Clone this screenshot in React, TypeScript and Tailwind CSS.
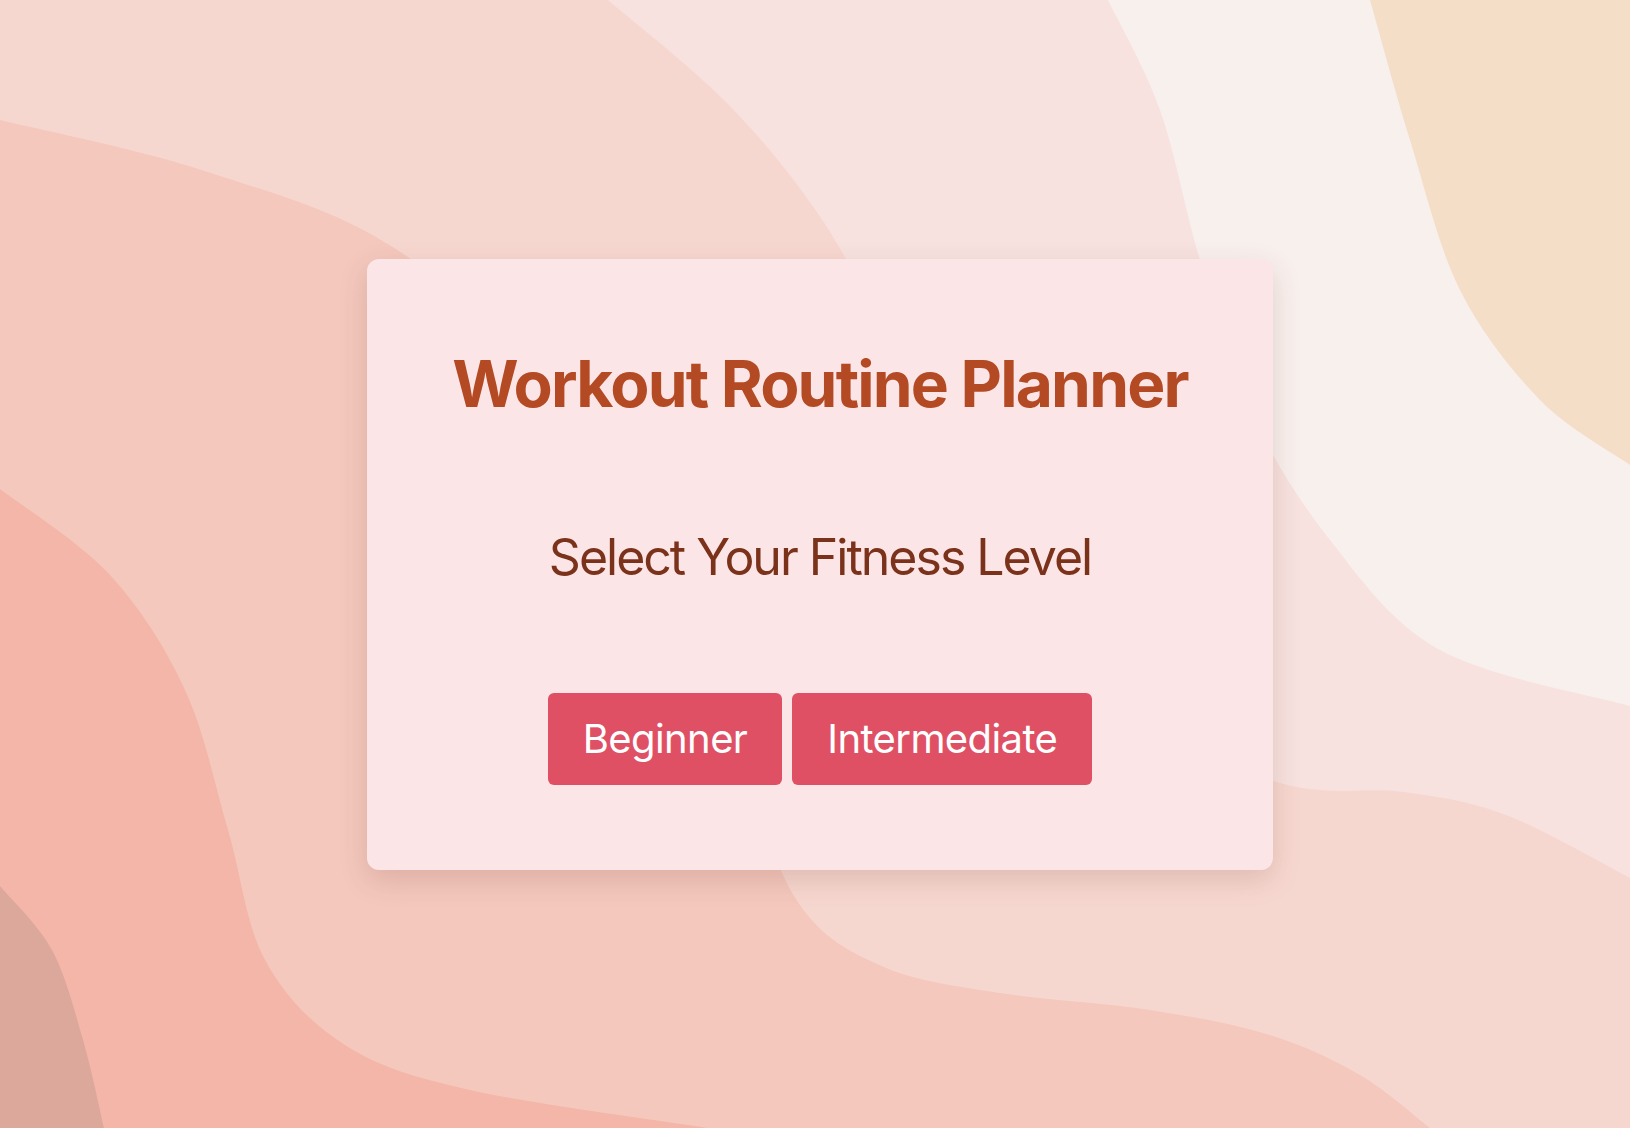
import React from "react";

type Pt = [number, number];

// catmull-rom through the points -> smooth cubic path
function smooth(points: Pt[]): string {
  let d = `M${points[0][0]},${points[0][1]}`;
  for (let i = 0; i < points.length - 1; i++) {
    const p0 = points[i - 1] || points[i];
    const p1 = points[i];
    const p2 = points[i + 1];
    const p3 = points[i + 2] || p2;
    const c1x = p1[0] + (p2[0] - p0[0]) / 6;
    const c1y = p1[1] + (p2[1] - p0[1]) / 6;
    const c2x = p2[0] - (p3[0] - p1[0]) / 6;
    const c2y = p2[1] - (p3[1] - p1[1]) / 6;
    d += ` C${c1x},${c1y} ${c2x},${c2y} ${p2[0]},${p2[1]}`;
  }
  return d;
}

const layers: { color: string; edge: Pt[]; close: string }[] = [
  {
    color: "#f8f0ed",
    edge: [
      [1108, 0],
      [1160, 110],
      [1200, 260],
      [1250, 410],
      [1330, 540],
      [1440, 650],
      [1630, 706],
    ],
    close: " L1630,0 Z",
  },
  {
    color: "#f5dec7",
    edge: [
      [1370, 0],
      [1410, 140],
      [1460, 290],
      [1540, 400],
      [1630, 465],
    ],
    close: " L1630,0 Z",
  },
  {
    color: "#f6d7cf",
    edge: [
      [608, 0],
      [728, 104],
      [821, 218],
      [880, 330],
      [960, 520],
      [1080, 690],
      [1273, 781],
      [1404, 792],
      [1506, 815],
      [1630, 878],
    ],
    close: " L1630,1128 L0,1128 L0,0 Z",
  },
  {
    color: "#f4c8bd",
    edge: [
      [0, 120],
      [208, 172],
      [405, 255],
      [620, 450],
      [740, 760],
      [800, 905],
      [884, 967],
      [1000, 993],
      [1150, 1010],
      [1270, 1035],
      [1360, 1075],
      [1430, 1128],
    ],
    close: " L0,1128 Z",
  },
  {
    color: "#f3b6a9",
    edge: [
      [0, 489],
      [110, 575],
      [185, 690],
      [228, 830],
      [265, 960],
      [345, 1045],
      [470, 1090],
      [707, 1128],
    ],
    close: " L0,1128 Z",
  },
  {
    color: "#dca89b",
    edge: [
      [0, 886],
      [52, 950],
      [83, 1040],
      [104, 1128],
    ],
    close: " L0,1128 Z",
  },
];

function Backdrop() {
  return (
    <svg
      className="absolute inset-0 h-full w-full"
      viewBox="0 0 1630 1128"
      preserveAspectRatio="none"
    >
      <rect width="1630" height="1128" fill="#f7e2df" />
      {layers.map((l, i) => (
        <path key={i} d={smooth(l.edge) + l.close} fill={l.color} />
      ))}
    </svg>
  );
}

const levels = ["Beginner", "Intermediate"];

export default function App() {
  return (
    <div
      className="relative h-screen w-full overflow-hidden"
      style={{ fontFamily: 'Inter, "Noto Sans", sans-serif' }}
    >
      <Backdrop />
      <div className="relative flex h-full items-center justify-center pl-[10px]">
        <div className="flex w-[906px] flex-col items-center rounded-xl bg-[#fce5e7] pt-[93px] pb-[85px] shadow-[0_10px_28px_rgba(120,60,50,0.18)]">
          <h1 className="text-[64px] font-bold leading-none tracking-[-1.8px] text-[#b44a23]">
            Workout Routine Planner
          </h1>
          <h2 className="mt-[116px] text-[50px] leading-none tracking-[-2px] text-[#7b321b]">
            Select Your Fitness Level
          </h2>
          <div className="mt-[111px] flex gap-[10px]">
            {levels.map((lvl) => (
              <button
                key={lvl}
                className="flex h-[92px] items-center rounded-md bg-[#e05065] px-[35px] text-[40px] leading-none tracking-[-0.6px] text-white"
              >
                {lvl}
              </button>
            ))}
          </div>
        </div>
      </div>
    </div>
  );
}
